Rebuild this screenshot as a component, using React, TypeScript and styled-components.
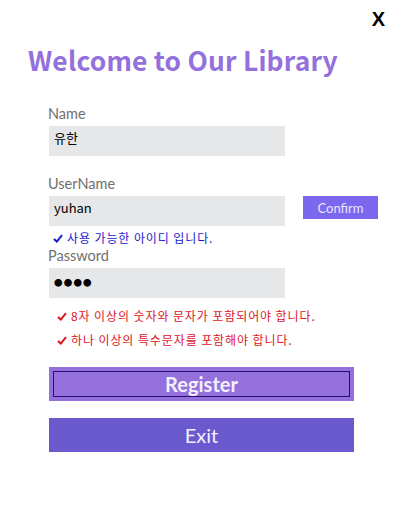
import React from "react";
import styled, { createGlobalStyle } from "styled-components";

const Global = createGlobalStyle`
  html, body { margin: 0; padding: 0; background: #fff; }
  body { font-family: "Noto Sans CJK KR", "Noto Sans", sans-serif; }
`;

const Page = styled.div`
  width: 403px;
  height: 508px;
  display: flex;
  flex-direction: column;
  box-sizing: border-box;
  position: relative;
`;

const Close = styled.div`
  position: absolute;
  top: 8px;
  right: 18px;
  font-family: "Liberation Sans", Arial, sans-serif;
  font-weight: 700;
  font-size: 20px;
  color: #000;
`;

const Title = styled.h1`
  margin: 42px 0 0 28px;
  font-family: "Noto Sans CJK KR", "Noto Sans", sans-serif;
  font-weight: 700;
  font-size: 26.4px;
  line-height: 36px;
  color: #9370db;
  letter-spacing: 0.2px;
`;

const Form = styled.div`
  display: flex;
  flex-direction: column;
  padding-left: 48px;
  margin-top: 27px;
`;

const Label = styled.div<{ $mt?: number }>`
  font-family: "Lato", "Open Sans", sans-serif;
  font-size: 14.5px;
  line-height: 18px;
  color: #707070;
  margin-top: ${(p) => p.$mt ?? 0}px;
  margin-bottom: 3px;
`;

const Row = styled.div`
  display: flex;
  align-items: flex-start;
  gap: 18px;
`;

const Field = styled.div`
  width: 236px;
  height: 30px;
  margin-left: 1px;
  background: #e6e7e8;
  box-sizing: border-box;
  padding: 2px 0 0 5px;
  font-family: "Noto Sans CJK KR", "Noto Sans", sans-serif;
  font-size: 13px;
  line-height: 20px;
  color: #000;
`;

const Dots = styled.span`
  font-size: 8.5px;
  letter-spacing: 1.2px;
  line-height: 24px;
`;

const Confirm = styled.button`
  width: 75px;
  height: 23px;
  border: none;
  background: #7b68ee;
  color: #e8e4ff;
  font-family: "Lato", "Open Sans", sans-serif;
  font-size: 13px;
  padding: 0;
`;

const Msg = styled.div<{ $color: string; $ml: number; $mt: number }>`
  display: flex;
  align-items: center;
  gap: 4px;
  margin-left: ${(p) => p.$ml}px;
  margin-top: ${(p) => p.$mt}px;
  font-family: "Noto Sans CJK KR", "Noto Sans", sans-serif;
  font-size: 12px;
  letter-spacing: 0.9px;
  line-height: 16px;
  color: ${(p) => p.$color};
`;

const Check = ({ color }: { color: string }) => (
  <svg width="10" height="9" viewBox="0 0 10 9">
    <path d="M1 5 L3.8 7.6 L9 1.2" fill="none" stroke={color} strokeWidth="2" />
  </svg>
);

const Button = styled.button<{ $bg: string; $mt: number; $bold?: boolean }>`
  width: 305px;
  height: 34px;
  margin-left: 1px;
  margin-top: ${(p) => p.$mt}px;
  border: none;
  padding: 4px;
  background: ${(p) => p.$bg};
  color: #f3efff;
  font-family: "Lato", "Open Sans", sans-serif;
  font-size: 20px;
  font-weight: ${(p) => (p.$bold ? 700 : 400)};
  display: flex;
  align-items: stretch;
`;

const Inner = styled.span<{ $outline?: boolean }>`
  flex: 1;
  display: flex;
  align-items: center;
  justify-content: center;
  border: 1px solid ${(p) => (p.$outline ? "#2a0a6e" : "transparent")};
`;

export default function App() {
  return (
    <Page>
      <Global />
      <Close>X</Close>
      <Title>Welcome to Our Library</Title>
      <Form>
        <Label>Name</Label>
        <Field>유한</Field>
        <Label $mt={19}>UserName</Label>
        <Row>
          <Field>yuhan</Field>
          <Confirm>Confirm</Confirm>
        </Row>
        <Msg $color="#1a1ad0" $ml={5} $mt={4}>
          <Check color="#1a1ad0" />
          사용 가능한 아이디 입니다.
        </Msg>
        <Label $mt={1}>Password</Label>
        <Field>
          <Dots>●●●●</Dots>
        </Field>
        <Msg $color="#e0141e" $ml={9} $mt={10}>
          <Check color="#e0141e" />
          8자 이상의 숫자와 문자가 포함되어야 합니다.
        </Msg>
        <Msg $color="#e0141e" $ml={9} $mt={8}>
          <Check color="#e0141e" />
          하나 이상의 특수문자를 포함해야 합니다.
        </Msg>
        <Button $bg="#9370db" $mt={19} $bold>
          <Inner $outline>Register</Inner>
        </Button>
        <Button $bg="#6a5acd" $mt={17}>
          <Inner>Exit</Inner>
        </Button>
      </Form>
    </Page>
  );
}
